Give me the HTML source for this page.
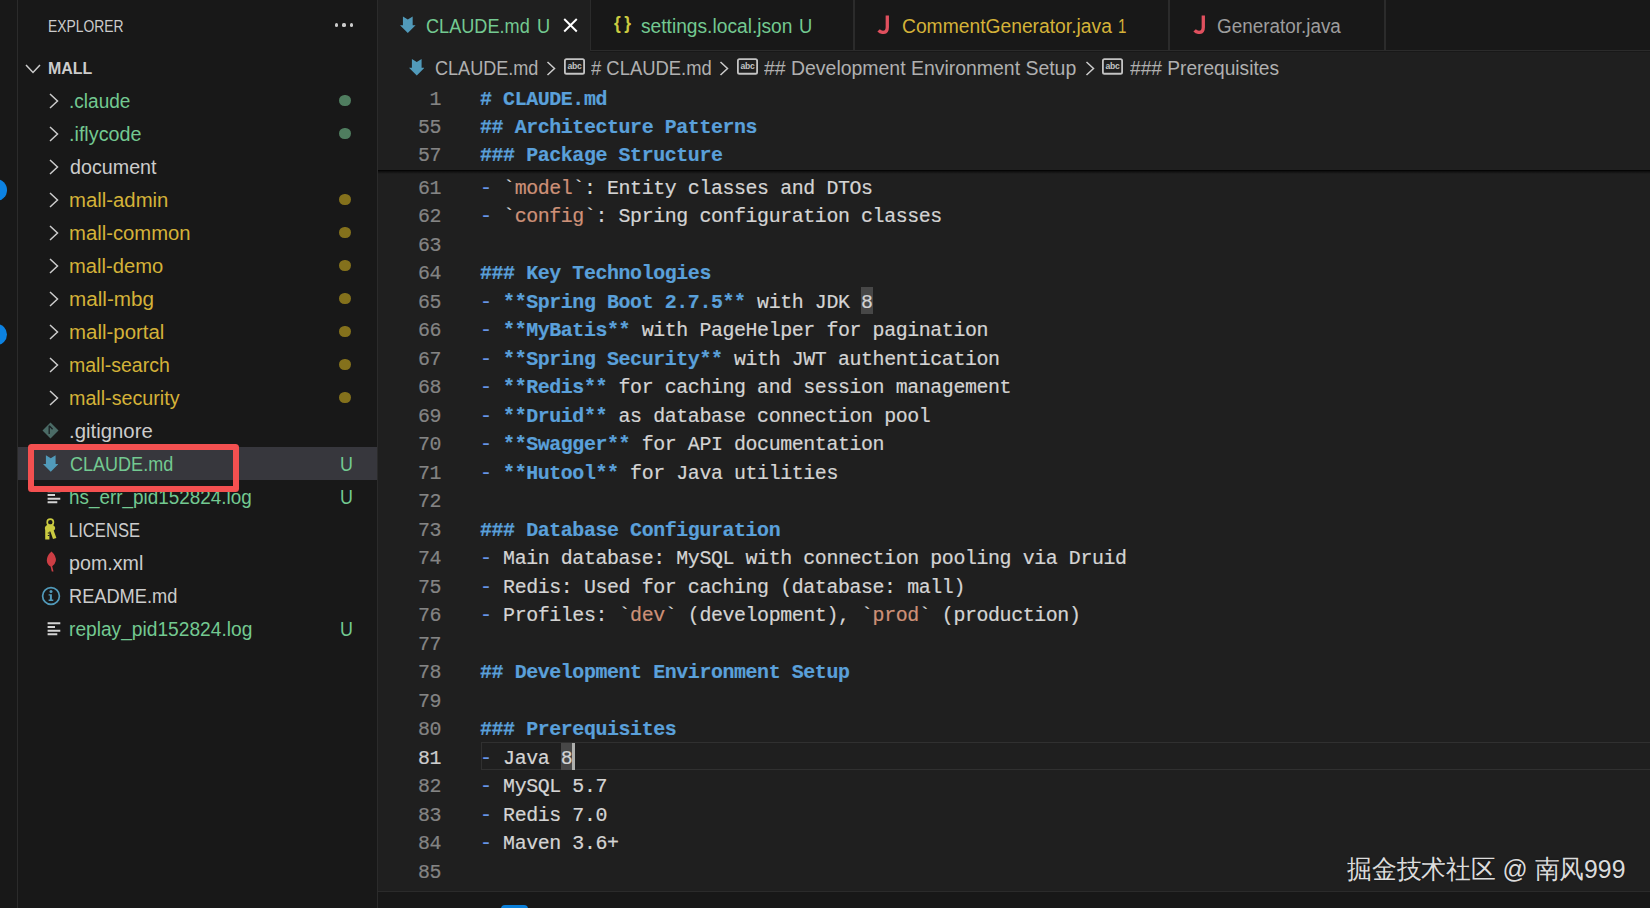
<!DOCTYPE html>
<html><head><meta charset="utf-8"><style>
html,body{margin:0;padding:0;width:1650px;height:908px;overflow:hidden;background:#181818}
.r{position:absolute;display:block}
.t{position:absolute;white-space:pre;transform-origin:0 0;display:inline-block}
.m{position:absolute;white-space:pre;font-family:"Liberation Mono", monospace;font-size:19.9px;line-height:19.9px;letter-spacing:-0.390px;color:#cccccc;-webkit-text-stroke:0.2px currentColor}
</style></head><body>
<div class="r" style="left:0px;top:0px;width:1650px;height:908px;background:#181818;"></div>
<div class="r" style="left:17px;top:0px;width:1px;height:908px;background:#2b2b2b;"></div>
<div class="r" style="left:377px;top:0px;width:1px;height:908px;background:#2b2b2b;"></div>
<div class="r" style="left:-15px;top:179.3px;width:21.6px;height:21.6px;background:#0c82e2;border-radius:50%"></div>
<div class="r" style="left:-15px;top:323.8px;width:21.6px;height:21.6px;background:#0c82e2;border-radius:50%"></div>
<span id="explorer" class="t" style="left:47.66px;top:18.03px;font-size:16.5px;line-height:16.5px;color:#cccccc;font-weight:400;font-family:'Liberation Sans', sans-serif;transform:scaleX(0.8398);">EXPLORER</span>
<div class="r" style="left:334.9px;top:23.4px;width:3.2px;height:3.2px;background:#cccccc;border-radius:50%"></div>
<div class="r" style="left:342.4px;top:23.4px;width:3.2px;height:3.2px;background:#cccccc;border-radius:50%"></div>
<div class="r" style="left:349.9px;top:23.4px;width:3.2px;height:3.2px;background:#cccccc;border-radius:50%"></div>
<svg class="r" style="left:25px;top:63px;" width="16" height="12" viewBox="0 0 16 12"><path d="M1 2 L8 9.5 L15 2" fill="none" stroke="#cccccc" stroke-width="1.5"/></svg>
<span id="mall" class="t" style="left:47.83px;top:60.03px;font-size:16.5px;line-height:16.5px;color:#cccccc;font-weight:700;font-family:'Liberation Sans', sans-serif;transform:scaleX(0.9656);">MALL</span>
<svg class="r" style="left:48px;top:92.7px;" width="12" height="16" viewBox="0 0 12 16"><path d="M2 1 L9.5 8 L2 15" fill="none" stroke="#cccccc" stroke-width="1.5"/></svg>
<span id="row0" class="t" style="left:68.62px;top:92.19px;font-size:19.5px;line-height:19.5px;color:#73c991;font-weight:400;font-family:'Liberation Sans', sans-serif;transform:scaleX(0.9765);">.claude</span>
<div class="r" style="left:339px;top:94.7px;width:11.5px;height:11.5px;background:#4f7d5f;border-radius:50%"></div>
<svg class="r" style="left:48px;top:125.69999999999999px;" width="12" height="16" viewBox="0 0 12 16"><path d="M2 1 L9.5 8 L2 15" fill="none" stroke="#cccccc" stroke-width="1.5"/></svg>
<span id="row1" class="t" style="left:68.59px;top:125.19px;font-size:19.5px;line-height:19.5px;color:#73c991;font-weight:400;font-family:'Liberation Sans', sans-serif;transform:scaleX(1.0131);">.iflycode</span>
<div class="r" style="left:339px;top:127.69999999999999px;width:11.5px;height:11.5px;background:#4f7d5f;border-radius:50%"></div>
<svg class="r" style="left:48px;top:158.7px;" width="12" height="16" viewBox="0 0 12 16"><path d="M2 1 L9.5 8 L2 15" fill="none" stroke="#cccccc" stroke-width="1.5"/></svg>
<span id="row2" class="t" style="left:69.60px;top:158.19px;font-size:19.5px;line-height:19.5px;color:#cccccc;font-weight:400;font-family:'Liberation Sans', sans-serif;transform:scaleX(1.0102);">document</span>
<svg class="r" style="left:48px;top:191.7px;" width="12" height="16" viewBox="0 0 12 16"><path d="M2 1 L9.5 8 L2 15" fill="none" stroke="#cccccc" stroke-width="1.5"/></svg>
<span id="row3" class="t" style="left:68.56px;top:191.19px;font-size:19.5px;line-height:19.5px;color:#d4b238;font-weight:400;font-family:'Liberation Sans', sans-serif;transform:scaleX(1.0426);">mall-admin</span>
<div class="r" style="left:339px;top:193.7px;width:11.5px;height:11.5px;background:#84711c;border-radius:50%"></div>
<svg class="r" style="left:48px;top:224.7px;" width="12" height="16" viewBox="0 0 12 16"><path d="M2 1 L9.5 8 L2 15" fill="none" stroke="#cccccc" stroke-width="1.5"/></svg>
<span id="row4" class="t" style="left:68.56px;top:224.19px;font-size:19.5px;line-height:19.5px;color:#d4b238;font-weight:400;font-family:'Liberation Sans', sans-serif;transform:scaleX(1.0393);">mall-common</span>
<div class="r" style="left:339px;top:226.7px;width:11.5px;height:11.5px;background:#84711c;border-radius:50%"></div>
<svg class="r" style="left:48px;top:257.7px;" width="12" height="16" viewBox="0 0 12 16"><path d="M2 1 L9.5 8 L2 15" fill="none" stroke="#cccccc" stroke-width="1.5"/></svg>
<span id="row5" class="t" style="left:68.57px;top:257.19px;font-size:19.5px;line-height:19.5px;color:#d4b238;font-weight:400;font-family:'Liberation Sans', sans-serif;transform:scaleX(1.0346);">mall-demo</span>
<div class="r" style="left:339px;top:259.7px;width:11.5px;height:11.5px;background:#84711c;border-radius:50%"></div>
<svg class="r" style="left:48px;top:290.7px;" width="12" height="16" viewBox="0 0 12 16"><path d="M2 1 L9.5 8 L2 15" fill="none" stroke="#cccccc" stroke-width="1.5"/></svg>
<span id="row6" class="t" style="left:68.54px;top:290.19px;font-size:19.5px;line-height:19.5px;color:#d4b238;font-weight:400;font-family:'Liberation Sans', sans-serif;transform:scaleX(1.0608);">mall-mbg</span>
<div class="r" style="left:339px;top:292.7px;width:11.5px;height:11.5px;background:#84711c;border-radius:50%"></div>
<svg class="r" style="left:48px;top:323.7px;" width="12" height="16" viewBox="0 0 12 16"><path d="M2 1 L9.5 8 L2 15" fill="none" stroke="#cccccc" stroke-width="1.5"/></svg>
<span id="row7" class="t" style="left:68.55px;top:323.19px;font-size:19.5px;line-height:19.5px;color:#d4b238;font-weight:400;font-family:'Liberation Sans', sans-serif;transform:scaleX(1.0480);">mall-portal</span>
<div class="r" style="left:339px;top:325.7px;width:11.5px;height:11.5px;background:#84711c;border-radius:50%"></div>
<svg class="r" style="left:48px;top:356.7px;" width="12" height="16" viewBox="0 0 12 16"><path d="M2 1 L9.5 8 L2 15" fill="none" stroke="#cccccc" stroke-width="1.5"/></svg>
<span id="row8" class="t" style="left:68.60px;top:356.19px;font-size:19.5px;line-height:19.5px;color:#d4b238;font-weight:400;font-family:'Liberation Sans', sans-serif;transform:scaleX(0.9997);">mall-search</span>
<div class="r" style="left:339px;top:358.7px;width:11.5px;height:11.5px;background:#84711c;border-radius:50%"></div>
<svg class="r" style="left:48px;top:389.7px;" width="12" height="16" viewBox="0 0 12 16"><path d="M2 1 L9.5 8 L2 15" fill="none" stroke="#cccccc" stroke-width="1.5"/></svg>
<span id="row9" class="t" style="left:68.59px;top:389.19px;font-size:19.5px;line-height:19.5px;color:#d4b238;font-weight:400;font-family:'Liberation Sans', sans-serif;transform:scaleX(1.0103);">mall-security</span>
<div class="r" style="left:339px;top:391.7px;width:11.5px;height:11.5px;background:#84711c;border-radius:50%"></div>
<svg class="r" style="left:42px;top:422.2px;" width="17" height="17" viewBox="0 0 17 17"><path d="M8.5 0.5 L16.5 8.5 L8.5 16.5 L0.5 8.5 Z" fill="#4b6b66"/><path d="M7.2 3.8 L7.2 12 M7.2 3.8 L10.6 7.2" stroke="#1a2224" stroke-width="1.3" fill="none"/></svg>
<span id="row10" class="t" style="left:68.56px;top:422.19px;font-size:19.5px;line-height:19.5px;color:#cccccc;font-weight:400;font-family:'Liberation Sans', sans-serif;transform:scaleX(1.0437);">.gitignore</span>
<div class="r" style="left:18px;top:447.2px;width:359px;height:33px;background:#37373d;"></div>
<svg class="r" style="left:42.5px;top:455.2px;" width="15.5" height="17" viewBox="0 0 16 17"><path d="M3 0 L8 3.2 L13 0 L13 9 L16 9 L8 17 L0 9 L3 9 Z" fill="#519aba"/></svg>
<span id="row11" class="t" style="left:69.60px;top:455.19px;font-size:19.5px;line-height:19.5px;color:#73c991;font-weight:400;font-family:'Liberation Sans', sans-serif;transform:scaleX(0.9245);">CLAUDE.md</span>
<span id="u11" class="t" style="left:340.08px;top:455.19px;font-size:19.5px;line-height:19.5px;color:#73c991;font-weight:400;font-family:'Liberation Sans', sans-serif;transform:scaleX(0.9167);">U</span>
<svg class="r" style="left:46.5px;top:488.7px;" width="14" height="16" viewBox="0 0 14 16"><path d="M0.6 2.2 H13.3 M0.6 6 H8 M0.6 9.7 H13.3 M0.6 13.3 H10.3" stroke="#d4d4d4" stroke-width="2" fill="none"/></svg>
<span id="row12" class="t" style="left:68.63px;top:488.19px;font-size:19.5px;line-height:19.5px;color:#73c991;font-weight:400;font-family:'Liberation Sans', sans-serif;transform:scaleX(0.9684);">hs_err_pid152824.log</span>
<span id="u12" class="t" style="left:340.08px;top:488.19px;font-size:19.5px;line-height:19.5px;color:#73c991;font-weight:400;font-family:'Liberation Sans', sans-serif;transform:scaleX(0.9167);">U</span>
<svg class="r" style="left:44px;top:518.2px;" width="13" height="22" viewBox="0 0 13 22"><circle cx="6.3" cy="4.3" r="3.1" fill="none" stroke="#cbcb41" stroke-width="1.7"/><ellipse cx="6" cy="10" rx="5.2" ry="3.6" fill="#cbcb41"/><path d="M1.2 10 L5.4 10 L5.4 21.5 L1.2 21.5 Z" fill="#cbcb41"/><path d="M5.5 11 L8.8 10 L12.4 20 L9 21 Z" fill="#cbcb41"/><path d="M5.4 15 h-1.6 M5.4 17.5 h-1.6" stroke="#181818" stroke-width="1"/></svg>
<span id="row13" class="t" style="left:68.75px;top:521.19px;font-size:19.5px;line-height:19.5px;color:#cccccc;font-weight:400;font-family:'Liberation Sans', sans-serif;transform:scaleX(0.8515);">LICENSE</span>
<svg class="r" style="left:45.5px;top:551.2px;" width="11" height="21" viewBox="0 0 11 21"><path d="M5.5 0.5 Q10.5 5 9.8 10 Q9 13.5 6.2 15.2 L7.5 20.5 L5.8 20.5 L4.6 15.6 Q1 13.5 0.8 9.5 Q0.8 4.5 5.5 0.5 Z" fill="#cc3e44"/></svg>
<span id="row14" class="t" style="left:68.59px;top:554.19px;font-size:19.5px;line-height:19.5px;color:#cccccc;font-weight:400;font-family:'Liberation Sans', sans-serif;transform:scaleX(1.0091);">pom.xml</span>
<svg class="r" style="left:40.5px;top:585.7px;" width="20" height="20" viewBox="0 0 20 20"><circle cx="10" cy="10" r="8.4" fill="none" stroke="#519aba" stroke-width="1.7"/><circle cx="10" cy="5.6" r="1.5" fill="#519aba"/><path d="M7.6 8.2 H10.9 V13.6 H12.3 V15 H7.6 V13.6 H8.9 V9.6 H7.6 Z" fill="#519aba"/></svg>
<span id="row15" class="t" style="left:68.67px;top:587.19px;font-size:19.5px;line-height:19.5px;color:#cccccc;font-weight:400;font-family:'Liberation Sans', sans-serif;transform:scaleX(0.9344);">README.md</span>
<svg class="r" style="left:46.5px;top:620.7px;" width="14" height="16" viewBox="0 0 14 16"><path d="M0.6 2.2 H13.3 M0.6 6 H8 M0.6 9.7 H13.3 M0.6 13.3 H10.3" stroke="#d4d4d4" stroke-width="2" fill="none"/></svg>
<span id="row16" class="t" style="left:68.62px;top:620.19px;font-size:19.5px;line-height:19.5px;color:#73c991;font-weight:400;font-family:'Liberation Sans', sans-serif;transform:scaleX(0.9830);">replay_pid152824.log</span>
<span id="u16" class="t" style="left:340.08px;top:620.19px;font-size:19.5px;line-height:19.5px;color:#73c991;font-weight:400;font-family:'Liberation Sans', sans-serif;transform:scaleX(0.9167);">U</span>
<div class="r" style="left:27.8px;top:444.3px;width:211.5px;height:48px;background:transparent;box-sizing:border-box;border:6.2px solid #f35050;border-radius:3.5px"></div>
<div class="r" style="left:378px;top:0px;width:1272px;height:51px;background:#181818;"></div>
<div class="r" style="left:378px;top:49.7px;width:1272px;height:1.4px;background:#2b2b2b;"></div>
<div class="r" style="left:378px;top:0px;width:212px;height:51.5px;background:#1f1f1f;"></div>
<div class="r" style="left:589.8px;top:0px;width:1.5px;height:51px;background:#2b2b2b;"></div>
<div class="r" style="left:853px;top:0px;width:1.5px;height:51px;background:#2b2b2b;"></div>
<div class="r" style="left:1168px;top:0px;width:1.5px;height:51px;background:#2b2b2b;"></div>
<div class="r" style="left:1384px;top:0px;width:1.5px;height:51px;background:#2b2b2b;"></div>
<svg class="r" style="left:400px;top:15.6px;" width="15.6" height="17.4" viewBox="0 0 16 17"><path d="M3 0 L8 3.2 L13 0 L13 9 L16 9 L8 17 L0 9 L3 9 Z" fill="#519aba"/></svg>
<span id="tab1" class="t" style="left:426.00px;top:17.09px;font-size:19.5px;line-height:19.5px;color:#73c991;font-weight:400;font-family:'Liberation Sans', sans-serif;transform:scaleX(0.9299);">CLAUDE.md</span>
<span id="tab1u" class="t" style="left:536.67px;top:17.09px;font-size:19.5px;line-height:19.5px;color:#73c991;font-weight:400;font-family:'Liberation Sans', sans-serif;transform:scaleX(0.9333);">U</span>
<svg class="r" style="left:563px;top:18px;" width="15" height="14.5" viewBox="0 0 15 15"><path d="M1 1 L14 14 M14 1 L1 14" stroke="#ffffff" stroke-width="2"/></svg>
<span id="tab2i" class="t" style="left:613.50px;top:14.36px;font-size:18px;line-height:18px;color:#cbcb41;font-weight:700;font-family:'Liberation Sans', sans-serif;transform:scaleX(0.9654);">{ }</span>
<span id="tab2" class="t" style="left:640.60px;top:17.09px;font-size:19.5px;line-height:19.5px;color:#73c991;font-weight:400;font-family:'Liberation Sans', sans-serif;transform:scaleX(0.9839);">settings.local.json</span>
<span id="tab2u" class="t" style="left:798.76px;top:17.09px;font-size:19.5px;line-height:19.5px;color:#73c991;font-weight:400;font-family:'Liberation Sans', sans-serif;transform:scaleX(0.9417);">U</span>
<svg class="r" style="left:876px;top:14px;" width="16" height="20" viewBox="0 0 16 20"><path d="M11.3 1.6 V13.2 Q11.3 18.4 7 18.4 Q4.4 18.4 2.6 16.4" fill="none" stroke="#e0505e" stroke-width="3.3"/></svg>
<span id="tab3" class="t" style="left:902.00px;top:17.09px;font-size:19.5px;line-height:19.5px;color:#d4b238;font-weight:400;font-family:'Liberation Sans', sans-serif;transform:scaleX(0.9878);">CommentGenerator.java</span>
<span id="tab3n" class="t" style="left:1118.22px;top:17.09px;font-size:19.5px;line-height:19.5px;color:#d4b238;font-weight:400;font-family:'Liberation Sans', sans-serif;transform:scaleX(0.7778);">1</span>
<svg class="r" style="left:1191.5px;top:14px;" width="16" height="20" viewBox="0 0 16 20"><path d="M11.3 1.6 V13.2 Q11.3 18.4 7 18.4 Q4.4 18.4 2.6 16.4" fill="none" stroke="#e0505e" stroke-width="3.3"/></svg>
<span id="tab4" class="t" style="left:1217.00px;top:17.09px;font-size:19.5px;line-height:19.5px;color:#9d9d9d;font-weight:400;font-family:'Liberation Sans', sans-serif;transform:scaleX(0.9682);">Generator.java</span>
<div class="r" style="left:378px;top:51.5px;width:1272px;height:840px;background:#1f1f1f;"></div>
<svg class="r" style="left:408.5px;top:59px;" width="15.5" height="16.5" viewBox="0 0 16 17"><path d="M3 0 L8 3.2 L13 0 L13 9 L16 9 L8 17 L0 9 L3 9 Z" fill="#519aba"/></svg>
<span id="bc1" class="t" style="left:435.00px;top:58.89px;font-size:19.5px;line-height:19.5px;color:#b0b0b0;font-weight:400;font-family:'Liberation Sans', sans-serif;transform:scaleX(0.9263);">CLAUDE.md</span>
<svg class="r" style="left:546px;top:60.5px;" width="10" height="15" viewBox="0 0 10 15"><path d="M1.5 1 L8.5 7.5 L1.5 14" fill="none" stroke="#cccccc" stroke-width="1.5"/></svg>
<svg class="r" style="left:564px;top:58px;" width="21" height="16.5" viewBox="0 0 21 16"><rect x="0.9" y="0.9" width="19.2" height="14.6" rx="1.6" fill="none" stroke="#c4c4c4" stroke-width="1.8"/><text x="10.5" y="10.6" font-family="Liberation Sans" font-size="8.6" font-weight="700" fill="#c4c4c4" text-anchor="middle" letter-spacing="-0.2">abc</text></svg>
<span id="bc2" class="t" style="left:591.00px;top:58.89px;font-size:19.5px;line-height:19.5px;color:#b0b0b0;font-weight:400;font-family:'Liberation Sans', sans-serif;transform:scaleX(0.9447);"># CLAUDE.md</span>
<svg class="r" style="left:719px;top:60.5px;" width="10" height="15" viewBox="0 0 10 15"><path d="M1.5 1 L8.5 7.5 L1.5 14" fill="none" stroke="#cccccc" stroke-width="1.5"/></svg>
<svg class="r" style="left:737px;top:58px;" width="21" height="16.5" viewBox="0 0 21 16"><rect x="0.9" y="0.9" width="19.2" height="14.6" rx="1.6" fill="none" stroke="#c4c4c4" stroke-width="1.8"/><text x="10.5" y="10.6" font-family="Liberation Sans" font-size="8.6" font-weight="700" fill="#c4c4c4" text-anchor="middle" letter-spacing="-0.2">abc</text></svg>
<span id="bc3" class="t" style="left:764.00px;top:58.89px;font-size:19.5px;line-height:19.5px;color:#b0b0b0;font-weight:400;font-family:'Liberation Sans', sans-serif;transform:scaleX(0.9967);">## Development Environment Setup</span>
<svg class="r" style="left:1084.5px;top:60.5px;" width="10" height="15" viewBox="0 0 10 15"><path d="M1.5 1 L8.5 7.5 L1.5 14" fill="none" stroke="#cccccc" stroke-width="1.5"/></svg>
<svg class="r" style="left:1102px;top:58px;" width="21" height="16.5" viewBox="0 0 21 16"><rect x="0.9" y="0.9" width="19.2" height="14.6" rx="1.6" fill="none" stroke="#c4c4c4" stroke-width="1.8"/><text x="10.5" y="10.6" font-family="Liberation Sans" font-size="8.6" font-weight="700" fill="#c4c4c4" text-anchor="middle" letter-spacing="-0.2">abc</text></svg>
<span id="bc4" class="t" style="left:1129.80px;top:58.89px;font-size:19.5px;line-height:19.5px;color:#b0b0b0;font-weight:400;font-family:'Liberation Sans', sans-serif;transform:scaleX(0.9816);">### Prerequisites</span>
<div class="r" style="left:481px;top:742.3px;width:1169px;height:28px;background:transparent;box-sizing:border-box;border:1.5px solid #303030;border-right:none"></div>
<div class="r" style="left:861px;top:286.59999999999997px;width:12.2px;height:27.8px;background:#474747;"></div>
<div class="r" style="left:561px;top:742.5px;width:11.5px;height:27.4px;background:#474747;"></div>
<span class="m" style="left:417.90px;top:178.65px;color:#848484">61</span>
<span class="m" style="left:480px;top:178.65px"><span style="color:#6796e6;">-</span><span style="color:#d4d4d4;"> </span><span style="color:#d4d4d4;">`</span><span style="color:#ce9178;">model</span><span style="color:#d4d4d4;">`</span><span style="color:#d4d4d4;">: Entity classes and DTOs</span></span>
<span class="m" style="left:417.90px;top:207.15px;color:#848484">62</span>
<span class="m" style="left:480px;top:207.15px"><span style="color:#6796e6;">-</span><span style="color:#d4d4d4;"> </span><span style="color:#d4d4d4;">`</span><span style="color:#ce9178;">config</span><span style="color:#d4d4d4;">`</span><span style="color:#d4d4d4;">: Spring configuration classes</span></span>
<span class="m" style="left:417.90px;top:235.65px;color:#848484">63</span>
<span class="m" style="left:480px;top:235.65px"></span>
<span class="m" style="left:417.90px;top:264.15px;color:#848484">64</span>
<span class="m" style="left:480px;top:264.15px"><span style="color:#5aa0da;font-weight:700;">### Key Technologies</span></span>
<span class="m" style="left:417.90px;top:292.65px;color:#848484">65</span>
<span class="m" style="left:480px;top:292.65px"><span style="color:#6796e6;">-</span><span style="color:#d4d4d4;"> </span><span style="color:#5aa0da;font-weight:700;">**Spring Boot 2.7.5**</span><span style="color:#d4d4d4;"> with JDK </span><span style="color:#d4d4d4;">8</span></span>
<span class="m" style="left:417.90px;top:321.15px;color:#848484">66</span>
<span class="m" style="left:480px;top:321.15px"><span style="color:#6796e6;">-</span><span style="color:#d4d4d4;"> </span><span style="color:#5aa0da;font-weight:700;">**MyBatis**</span><span style="color:#d4d4d4;"> with PageHelper for pagination</span></span>
<span class="m" style="left:417.90px;top:349.65px;color:#848484">67</span>
<span class="m" style="left:480px;top:349.65px"><span style="color:#6796e6;">-</span><span style="color:#d4d4d4;"> </span><span style="color:#5aa0da;font-weight:700;">**Spring Security**</span><span style="color:#d4d4d4;"> with JWT authentication</span></span>
<span class="m" style="left:417.90px;top:378.15px;color:#848484">68</span>
<span class="m" style="left:480px;top:378.15px"><span style="color:#6796e6;">-</span><span style="color:#d4d4d4;"> </span><span style="color:#5aa0da;font-weight:700;">**Redis**</span><span style="color:#d4d4d4;"> for caching and session management</span></span>
<span class="m" style="left:417.90px;top:406.65px;color:#848484">69</span>
<span class="m" style="left:480px;top:406.65px"><span style="color:#6796e6;">-</span><span style="color:#d4d4d4;"> </span><span style="color:#5aa0da;font-weight:700;">**Druid**</span><span style="color:#d4d4d4;"> as database connection pool</span></span>
<span class="m" style="left:417.90px;top:435.15px;color:#848484">70</span>
<span class="m" style="left:480px;top:435.15px"><span style="color:#6796e6;">-</span><span style="color:#d4d4d4;"> </span><span style="color:#5aa0da;font-weight:700;">**Swagger**</span><span style="color:#d4d4d4;"> for API documentation</span></span>
<span class="m" style="left:417.90px;top:463.65px;color:#848484">71</span>
<span class="m" style="left:480px;top:463.65px"><span style="color:#6796e6;">-</span><span style="color:#d4d4d4;"> </span><span style="color:#5aa0da;font-weight:700;">**Hutool**</span><span style="color:#d4d4d4;"> for Java utilities</span></span>
<span class="m" style="left:417.90px;top:492.15px;color:#848484">72</span>
<span class="m" style="left:480px;top:492.15px"></span>
<span class="m" style="left:417.90px;top:520.65px;color:#848484">73</span>
<span class="m" style="left:480px;top:520.65px"><span style="color:#5aa0da;font-weight:700;">### Database Configuration</span></span>
<span class="m" style="left:417.90px;top:549.15px;color:#848484">74</span>
<span class="m" style="left:480px;top:549.15px"><span style="color:#6796e6;">-</span><span style="color:#d4d4d4;"> </span><span style="color:#d4d4d4;">Main database: MySQL with connection pooling via Druid</span></span>
<span class="m" style="left:417.90px;top:577.65px;color:#848484">75</span>
<span class="m" style="left:480px;top:577.65px"><span style="color:#6796e6;">-</span><span style="color:#d4d4d4;"> </span><span style="color:#d4d4d4;">Redis: Used for caching (database: mall)</span></span>
<span class="m" style="left:417.90px;top:606.15px;color:#848484">76</span>
<span class="m" style="left:480px;top:606.15px"><span style="color:#6796e6;">-</span><span style="color:#d4d4d4;"> </span><span style="color:#d4d4d4;">Profiles: </span><span style="color:#d4d4d4;">`</span><span style="color:#ce9178;">dev</span><span style="color:#d4d4d4;">`</span><span style="color:#d4d4d4;"> (development), </span><span style="color:#d4d4d4;">`</span><span style="color:#ce9178;">prod</span><span style="color:#d4d4d4;">`</span><span style="color:#d4d4d4;"> (production)</span></span>
<span class="m" style="left:417.90px;top:634.65px;color:#848484">77</span>
<span class="m" style="left:480px;top:634.65px"></span>
<span class="m" style="left:417.90px;top:663.15px;color:#848484">78</span>
<span class="m" style="left:480px;top:663.15px"><span style="color:#5aa0da;font-weight:700;">## Development Environment Setup</span></span>
<span class="m" style="left:417.90px;top:691.65px;color:#848484">79</span>
<span class="m" style="left:480px;top:691.65px"></span>
<span class="m" style="left:417.90px;top:720.15px;color:#848484">80</span>
<span class="m" style="left:480px;top:720.15px"><span style="color:#5aa0da;font-weight:700;">### Prerequisites</span></span>
<span class="m" style="left:417.90px;top:748.65px;color:#cccccc">81</span>
<span class="m" style="left:480px;top:748.65px"><span style="color:#6796e6;">-</span><span style="color:#d4d4d4;"> </span><span style="color:#d4d4d4;">Java </span><span style="color:#d4d4d4;">8</span></span>
<span class="m" style="left:417.90px;top:777.15px;color:#848484">82</span>
<span class="m" style="left:480px;top:777.15px"><span style="color:#6796e6;">-</span><span style="color:#d4d4d4;"> </span><span style="color:#d4d4d4;">MySQL 5.7</span></span>
<span class="m" style="left:417.90px;top:805.65px;color:#848484">83</span>
<span class="m" style="left:480px;top:805.65px"><span style="color:#6796e6;">-</span><span style="color:#d4d4d4;"> </span><span style="color:#d4d4d4;">Redis 7.0</span></span>
<span class="m" style="left:417.90px;top:834.15px;color:#848484">84</span>
<span class="m" style="left:480px;top:834.15px"><span style="color:#6796e6;">-</span><span style="color:#d4d4d4;"> </span><span style="color:#d4d4d4;">Maven 3.6+</span></span>
<span class="m" style="left:417.90px;top:862.65px;color:#848484">85</span>
<span class="m" style="left:480px;top:862.65px"></span>
<div class="r" style="left:572.2px;top:742.8px;width:2.4px;height:27px;background:#aeafad;"></div>
<div class="r" style="left:378px;top:85.5px;width:1272px;height:84.7px;background:#1f1f1f;"></div>
<span class="m" style="left:429.45px;top:89.55px;color:#848484">1</span>
<span class="m" style="left:480px;top:89.55px"><span style="color:#5aa0da;font-weight:700;"># CLAUDE.md</span></span>
<span class="m" style="left:417.90px;top:117.95px;color:#848484">55</span>
<span class="m" style="left:480px;top:117.95px"><span style="color:#5aa0da;font-weight:700;">## Architecture Patterns</span></span>
<span class="m" style="left:417.90px;top:146.35px;color:#848484">57</span>
<span class="m" style="left:480px;top:146.35px"><span style="color:#5aa0da;font-weight:700;">### Package Structure</span></span>
<div class="r" style="left:378px;top:170.2px;width:1272px;height:4px;background:linear-gradient(#000000 0%, rgba(0,0,0,0.55) 35%, rgba(0,0,0,0) 100%)"></div>
<div class="r" style="left:378px;top:890.5px;width:1272px;height:1.5px;background:#2b2b2b;"></div>
<div class="r" style="left:378px;top:892px;width:1272px;height:16px;background:#181818;"></div>
<div class="r" style="left:500.8px;top:905.2px;width:27.2px;height:10px;background:#0a7fd9;border-radius:4px"></div>
<span id="wm" class="t" style="left:1347.00px;top:855.99px;font-size:26px;line-height:26px;color:#dcdcdc;font-weight:400;font-family:'Liberation Sans', sans-serif;transform:scaleX(0.9528);text-shadow:0 0 2px rgba(0,0,0,0.3)">掘金技术社区 @ 南风999</span>
</body></html>
